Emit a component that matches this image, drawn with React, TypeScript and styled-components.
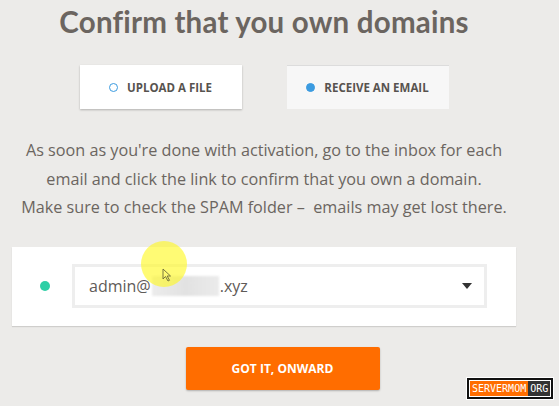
import React from "react"
import styled, { createGlobalStyle } from "styled-components"

const Global = createGlobalStyle`
  html, body {
    margin: 0;
    padding: 0;
    background: #ecebe9;
  }
  body {
    font-family: "Open Sans", "Liberation Sans", sans-serif;
    color: #6b6560;
  }
`

const Page = styled.div`
  position: relative;
  width: 559px;
  height: 406px;
  overflow: hidden;
`

const Column = styled.div`
  width: 528px;
  display: flex;
  flex-direction: column;
  align-items: center;
`

const Title = styled.h1`
  margin: 0;
  padding-top: 3px;
  font-family: Lato, "Open Sans", sans-serif;
  font-size: 29.5px;
  line-height: 38px;
  font-weight: 700;
  color: #6b6560;
  letter-spacing: 0.2px;
`

const Tabs = styled.div`
  display: flex;
  gap: 45px;
  margin-top: 24px;
`

const Tab = styled.div<{ active?: boolean }>`
  width: 162px;
  height: 44px;
  box-sizing: border-box;
  display: flex;
  align-items: center;
  justify-content: center;
  gap: 9px;
  background: ${(p) => (p.active ? "#f7f7f7" : "#ffffff")};
  border-top: 1px solid ${(p) => (p.active ? "#dcdcdc" : "transparent")};
  box-shadow: ${(p) => (p.active ? "none" : "0 1px 2px rgba(0,0,0,0.25)")};
  font-size: 11.5px;
  font-weight: 700;
  color: #57534f;
`

const Radio = styled.span<{ active?: boolean }>`
  width: 9px;
  height: 9px;
  border-radius: 50%;
  box-sizing: border-box;
  border: 1.5px solid #3b9be0;
  background: ${(p) => (p.active ? "#3b9be0" : "transparent")};
`

const Info = styled.p`
  margin: 27px 0 0;
  font-size: 16.2px;
  line-height: 28.5px;
  text-align: center;
  color: #6b6560;
`

const Card = styled.div`
  position: relative;
  margin-top: 25px;
  width: 504px;
  height: 79px;
  box-sizing: border-box;
  background: #fff;
  box-shadow: 0 1px 1px rgba(0, 0, 0, 0.12);
  display: flex;
  align-items: center;
  padding: 0 29px 0 28px;
`

const Dot = styled.span`
  width: 10px;
  height: 10px;
  border-radius: 50%;
  background: #2ecfa6;
  margin-right: 22px;
`

const Select = styled.div`
  position: relative;
  flex: 1;
  height: 44px;
  box-sizing: border-box;
  border: 3px solid #eeeeee;
  display: flex;
  align-items: center;
  padding: 0 12px 0 14px;
  font-size: 16px;
  color: #5f5b58;
`

const Blurred = styled.span`
  display: inline-block;
  width: 67px;
  height: 20px;
  margin: 0 1px;
  background: linear-gradient(90deg, #ececec, #e2e2e2 50%, #ebebeb);
  filter: blur(1px);
`

const Caret = styled.span`
  margin-left: auto;
  width: 0;
  height: 0;
  border-left: 5px solid transparent;
  border-right: 5px solid transparent;
  border-top: 6px solid #333;
`

const Highlight = styled.div`
  position: absolute;
  left: 129px;
  top: -6px;
  width: 46px;
  height: 46px;
  border-radius: 50%;
  background: rgba(255, 248, 30, 0.62);
  pointer-events: none;
`

const Cursor = styled.svg`
  position: absolute;
  left: 150px;
  top: 21px;
`

const ButtonRow = styled.div`
  margin-top: 21px;
  padding-left: 37px;
`

const Button = styled.button`
  width: 194px;
  height: 43px;
  border: none;
  border-radius: 2px;
  background: #ff6d00;
  box-shadow: 0 1px 2px rgba(0, 0, 0, 0.25);
  color: #fff;
  font-family: inherit;
  font-size: 12px;
  font-weight: 700;
`

const Mark = styled.div`
  position: absolute;
  left: 467px;
  top: 378px;
  display: flex;
  border: 2px solid #111;
  outline: 1px solid #fff;
  background: #fff;
  padding: 1px;
  font-family: "DejaVu Sans Mono", monospace;
  font-size: 10px;
  line-height: 15px;
  color: #fff;
`

const MarkPart = styled.span<{ dark?: boolean }>`
  background: ${(p) => (p.dark ? "#333" : "#ff6d00")};
  padding: 0 2px;
  letter-spacing: 0;
`

export default function App() {
  return (
    <Page>
      <Global />
      <Column>
        <Title>Confirm that you own domains</Title>
        <Tabs>
          <Tab>
            <Radio />
            UPLOAD A FILE
          </Tab>
          <Tab active>
            <Radio active />
            RECEIVE AN EMAIL
          </Tab>
        </Tabs>
        <Info>
          As soon as you're done with activation, go to the inbox for each
          <br />
          email and click the link to confirm that you own a domain.
          <br />
          Make sure to check the SPAM folder – &nbsp;emails may get lost there.
        </Info>
        <Card>
          <Dot />
          <Select>
            admin@<Blurred />.xyz
            <Caret />
          </Select>
          <Highlight />
          <Cursor width="10" height="14" viewBox="0 0 10 14">
            <path d="M1 1 L1 11 L3.5 8.5 L6 13 L7.5 12.3 L5.2 8 L8.5 8 Z" fill="none" stroke="#6b6a3a" strokeWidth="0.9" />
          </Cursor>
        </Card>
        <ButtonRow>
          <Button>GOT IT, ONWARD</Button>
        </ButtonRow>
      </Column>
      <Mark>
        <MarkPart>SERVERMOM</MarkPart>
        <MarkPart dark>ORG</MarkPart>
      </Mark>
    </Page>
  )
}
